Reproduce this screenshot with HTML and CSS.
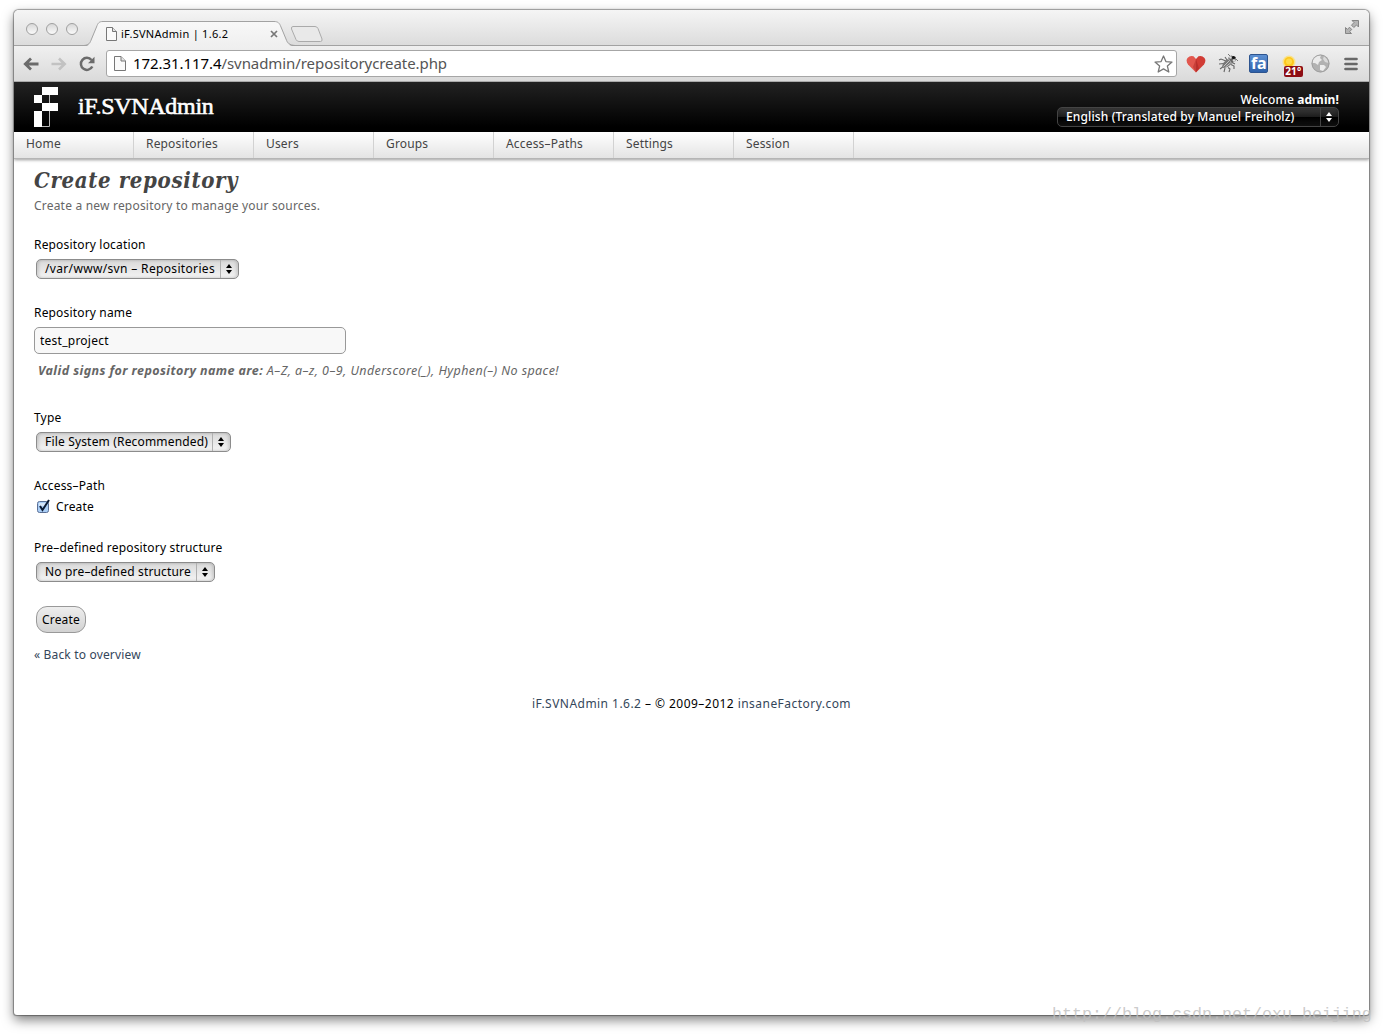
FILE: index.html
```html
<!DOCTYPE html>
<html lang="en">
<head>
  <meta charset="UTF-8" />
  <title>iF.SVNAdmin | 1.6.2</title>
  <link rel="stylesheet" href="styles.css">
</head>
<body>

  <div class="window">

    <div class="tabstrip">
      <div class="lights"><i></i><i></i><i></i></div>
      <div class="tab">
        <svg class="tab-shape" width="216" height="26" viewBox="0 0 216 26">
          <defs>
            <linearGradient id="tabFill" x1="0" y1="0" x2="0" y2="1">
              <stop offset="0" stop-color="#f8f8f8"/>
              <stop offset="1" stop-color="#efefef"/>
            </linearGradient>
          </defs>
          <path d="M0 25.5C5 25 6 23 7.500 19L12.500 6C14 2 15 .5 19 .5H190C194 .5 195.500 2 197 6L202 19C203.500 23 205 25 211 25.500V26H0Z" fill="url(#tabFill)"/>
          <path d="M0 24.500C5 24 6 22 7.500 18L12.500 6C14 2 15 .5 19 .5H190C194 .5 195.500 2 197 6L202 18C203.500 22 205 24 211 24.500" fill="none" stroke="#a2a2a2"/>
        </svg>
        <svg class="page-icon" width="11" height="14" viewBox="0 0 11 14">
          <path d="M.5.5H6.500L10.500 4.500V13.500H.5Z" fill="#fafafa" stroke="#777"/>
          <path d="M6.500.5V4.500H10.500" fill="#e4e4e4" stroke="#777"/>
        </svg>
        <span class="tab-title">iF.SVNAdmin | 1.6.2</span>
        <svg class="tab-close" width="8" height="8" viewBox="0 0 8 8">
          <path d="M1 1L7 7M7 1L1 7" stroke="#777" stroke-width="1.700"/>
        </svg>
      </div>
      <svg class="new-tab" width="34" height="18" viewBox="0 0 34 18">
        <path d="M3 1.500H25Q27 1.500 28 3.500L32 14Q32.500 16.500 30.500 16.500H9Q7 16.500 6 14.500L1.500 4Q1 1.500 3 1.500Z" fill="#e9e9e9" stroke="#aaa"/>
      </svg>
      <svg class="fullscreen" width="16" height="16" viewBox="0 0 16 16">
        <path d="M8 1.500H14.500V8L12.500 6L9.800 8.500L7.500 6.200L10 3.500Z" fill="#b4b4b4" stroke="#858585"/>
        <path d="M1.500 8.500V14.500H7.500L5.600 12.600L7.800 10.500L5.500 8.200L3.400 10.400Z" fill="#b4b4b4" stroke="#858585"/>
      </svg>
    </div>

    <div class="toolbar">
      <svg class="nav-icon" width="16" height="14" viewBox="0 0 16 14">
        <path d="M15.500 7H2.500M8 1.500L2.300 7L8 12.500" fill="none" stroke="#6b6b6b" stroke-width="2.800"/>
      </svg>
      <svg class="nav-icon" width="16" height="14" viewBox="0 0 16 14">
        <path d="M.5 7H13.500M8 1.500L13.700 7L8 12.500" fill="none" stroke="#c2c2c2" stroke-width="2.600"/>
      </svg>
      <svg class="reload" width="16" height="16" viewBox="0 0 16 16">
        <path d="M13.300 10.500A6 6 0 1 1 12.500 4" fill="none" stroke="#6b6b6b" stroke-width="2.500"/>
        <path d="M15.500 .8V7.300H9Z" fill="#6b6b6b"/>
      </svg>
      <div class="address">
        <svg width="12" height="15" viewBox="0 0 12 15">
          <path d="M.5.500H7L11.500 5V14.500H.5Z" fill="#fafafa" stroke="#777"/>
          <path d="M7 .5V5H11.500" fill="#e4e4e4" stroke="#777"/>
        </svg>
        <span class="url"><b>172.31.117.4</b>/svnadmin/repositorycreate.php</span>
        <svg class="bookmark" width="19" height="18" viewBox="0 0 19 18">
          <path d="M9.500 1L11.900 6.600L18 7.100L13.400 11.100L14.800 17L9.500 13.900L4.200 17L5.600 11.100L1 7.100L7.100 6.600Z" fill="#fff" stroke="#777" stroke-width="1.300" stroke-linejoin="round"/>
        </svg>
      </div>
      <div class="extensions">
        <svg width="20" height="18" viewBox="0 0 20 18">
          <path d="M10 17.500L2 9.500Q-.5 6 1.500 3Q4 0 7.500 1.300L10 4Z" fill="#e2574e"/>
          <path d="M10 17.500V4L12.500 1.300Q16 0 18.500 3Q20.500 6 18 9.500Z" fill="#d13c35"/>
          <path d="M10 4V17.500L7 12Z" fill="#c8403a"/>
          <path d="M10 4L13 13.500L10 17Z" fill="#b92f2b"/>
        </svg>
        <svg width="20" height="19" viewBox="0 0 20 19">
          <path d="M8 7L3 5L1 6M9 6L7 3M6 9.500L1 10M6 12L2 15M7 14L6 18M10 13.500L12 15L11 18M13 10.500L16 12L16 15M14 8.500L17 10" fill="none" stroke="#666" stroke-width="1.100"/>
          <path d="M4 14Q4 8 10 5L14 9Q11 14 4 14Z" fill="#777"/>
          <path d="M5.500 12.500L11.500 6.500M7.500 13L13 8.500" stroke="#c4c4c4"/>
          <path d="M10 4L13 1.500L18 3L17.500 7L14 9Z" fill="#666"/>
          <path d="M12 2L10 0M18 5L20 7" stroke="#777"/>
          <circle cx="12.500" cy="3.500" r="1.300" fill="#ddd"/>
          <circle cx="16" cy="6.500" r="1.300" fill="#ddd"/>
          <circle cx="15.500" cy="3.500" r="1.600" fill="#111"/>
        </svg>
        <span class="fa">fa</span>
        <span class="weather">
          <svg width="14" height="14" viewBox="0 0 14 14">
            <circle cx="7" cy="7" r="6.500" fill="#f9e28b"/>
            <circle cx="7" cy="7" r="5" fill="#fdc61c"/>
            <circle cx="7" cy="6.500" r="3" fill="#ffda4a"/>
          </svg>
          <em>21°</em>
        </span>
        <svg class="globe" width="19" height="19" viewBox="0 0 19 19">
          <circle cx="9.500" cy="9.500" r="9" fill="#b2b2b2"/>
          <path d="M3 4Q6 1 10 1.500L9 4L11 6L8 8L7 11L4 9L1.500 9Q1.500 6 3 4Z" fill="#ebebeb"/>
          <path d="M13 2L16 5L17.500 9L14 8L12 5Z" fill="#dadada"/>
          <path d="M9 11L13 11L15 13L12 17L9 16Z" fill="#ededed"/>
          <circle cx="9.500" cy="9.500" r="8.500" fill="none" stroke="#919191" stroke-opacity=".6"/>
        </svg>
        <svg class="menu" width="14" height="14" viewBox="0 0 14 14">
          <path d="M1.500 2H12.500M1.500 7H12.500M1.500 12H12.500" stroke="#686868" stroke-width="2.700" stroke-linecap="round"/>
        </svg>
      </div>
    </div>

    <div class="header">
      <svg class="logo" width="24" height="40" viewBox="0 0 24 40">
        <path d="M8 0H24V8H8ZM0 8H8V16H0ZM8 16H24V24H8ZM0 24H8V40H0Z" fill="#fff"/>
        <path d="M15.500 8V16M15.500 24V39.500H8" fill="none" stroke="#bbb"/>
      </svg>
      <div class="brand">iF.SVNAdmin</div>
      <div class="user">
        <div class="welcome">Welcome <b>admin!</b></div>
        <button type="button" class="select dark">
          <span>English (Translated by Manuel Freiholz)</span>
          <svg width="6" height="10" viewBox="0 0 6 10"><path d="M3 0L6 4H0ZM3 10L0 6H6Z" fill="#fff"/></svg>
        </button>
      </div>
    </div>

    <ul class="nav">
      <li>Home</li>
      <li>Repositories</li>
      <li>Users</li>
      <li>Groups</li>
      <li>Access–Paths</li>
      <li>Settings</li>
      <li>Session</li>
    </ul>

    <div class="content">
      <h1>Create repository</h1>
      <p class="desc">Create a new repository to manage your sources.</p>

      <form>
        <div class="field">
          <label>Repository location</label>
          <button type="button" class="select location">
            <span>/var/www/svn – Repositories</span>
            <svg width="6" height="10" viewBox="0 0 6 10"><path d="M3 0L6 4H0ZM3 10L0 6H6Z"/></svg>
          </button>
        </div>

        <div class="field name">
          <label>Repository name</label>
          <input type="text" value="test_project">
          <p class="hint"><b>Valid signs for repository name are:</b> A–Z, a–z, 0–9, Underscore(_), Hyphen(–) No space!</p>
        </div>

        <div class="field">
          <label>Type</label>
          <button type="button" class="select type">
            <span>File System (Recommended)</span>
            <svg width="6" height="10" viewBox="0 0 6 10"><path d="M3 0L6 4H0ZM3 10L0 6H6Z"/></svg>
          </button>
        </div>

        <div class="field access">
          <label>Access–Path</label>
          <div class="check">
            <svg width="14" height="15" viewBox="0 0 14 15">
              <rect x=".5" y="2.500" width="11" height="11" rx="2" fill="#a9cdf5" stroke="#5a6f95"/>
              <rect x="2" y="4" width="8" height="3" fill="#d5e6fa"/>
              <path d="M3 7L5.500 11L12 1" fill="none" stroke="#0b1a33" stroke-width="2"/>
            </svg>
            <span>Create</span>
          </div>
        </div>

        <div class="field">
          <label>Pre–defined repository structure</label>
          <button type="button" class="select structure">
            <span>No pre–defined structure</span>
            <svg width="6" height="10" viewBox="0 0 6 10"><path d="M3 0L6 4H0ZM3 10L0 6H6Z"/></svg>
          </button>
        </div>

        <button type="button" class="submit">Create</button>
      </form>

      <a class="back">« Back to overview</a>

      <div class="footer"><a>iF.SVNAdmin 1.6.2</a> – © 2009–2012 <a>insaneFactory.com</a></div>
    </div>

  </div>

  <div class="watermark">http://blog.csdn.net/oxu_beijing</div>

</body>
</html>
```
FILE: styles.css
```css
* {
  box-sizing: border-box;
}

body {
  margin: 0;
  height: 1035px;
  padding: 10px 14px 19px;
  overflow: hidden;
  background: #fff;
  color: #000;
  font-family: "Noto Sans", "Open Sans", sans-serif;
  font-size: 12px;
  line-height: 16px;
  letter-spacing: 0.17px;
}

svg {
  display: block;
  flex: none;
}

.window {
  width: 1355px;
  height: 1005px;
  border-radius: 5px 5px 3px 3px;
  background: #fff;
  box-shadow: 0 0 1px 0.5px rgba(0, 0, 0, 0.35), 0 5px 12px rgba(0, 0, 0, 0.5);
  overflow: hidden;
}

/* browser frame */
.tabstrip {
  display: flex;
  height: 36px;
  background: linear-gradient(#f5f5f5, #dcdcdc);
  border-bottom: 1px solid #a2a2a2;
}

.lights {
  display: flex;
  gap: 8px;
  padding: 13px 0 0 12px;
  width: 75px;
}

.lights i {
  width: 12px;
  height: 12px;
  border: 1px solid #a0a0a0;
  border-radius: 50%;
  background: linear-gradient(#d8d8d8, #fafafa);
}

.tab {
  position: relative;
  display: flex;
  align-items: center;
  width: 193px;
  height: 26px;
  margin-top: 11px;
  padding-left: 17px;
}

.tab-shape {
  position: absolute;
  left: -5px;
  top: 0;
}

.page-icon,
.tab-title,
.tab-close {
  position: relative;
}

.tab-title {
  flex: 1;
  margin-left: 4px;
  font-size: 11px;
  letter-spacing: 0.27px;
}

.tab-close {
  margin-right: 4px;
}

.new-tab {
  margin: 15px 0 0 8px;
}

.fullscreen {
  margin: 9px 9px 0 auto;
}

.toolbar {
  display: flex;
  align-items: center;
  height: 36px;
  padding: 0 11px 0 9px;
  background: linear-gradient(#f0f0f0, #dadada);
  border-bottom: 1px solid #aaa;
}

.nav-icon {
  margin-right: 12px;
}

.reload {
  margin-right: 11px;
}

.address {
  display: flex;
  align-items: center;
  width: 1071px;
  height: 27px;
  padding: 0 3px 0 7px;
  border: 1px solid #a6a6a6;
  border-radius: 3px;
  background: #fff;
}

.url {
  flex: 1;
  margin: -2px 0 0 7px;
  font-size: 15px;
  letter-spacing: -0.07px;
  color: #555;
}

.url b {
  font-weight: 400;
  color: #000;
}

.extensions {
  display: flex;
  flex: 1;
  align-items: center;
  justify-content: space-between;
  margin-left: 9px;
}

.fa {
  width: 19px;
  height: 19px;
  border: 1px solid #2d548f;
  border-radius: 2px;
  background: linear-gradient(#5d90d2, #2d60a9);
  color: #fff;
  font-size: 16px;
  font-weight: 700;
  line-height: 17px;
  letter-spacing: -0.3px;
  text-align: center;
}

.weather {
  position: relative;
  width: 22px;
  height: 17px;
  margin: 0 -2px 0 2px;
}

.weather em {
  position: absolute;
  left: 2px;
  top: 11px;
  width: 19px;
  height: 11px;
  border-radius: 2px;
  background: #8d0d14;
  color: #fff;
  font-size: 10px;
  font-style: normal;
  font-weight: 700;
  line-height: 11px;
  text-align: center;
}

.globe {
  margin: 0 2px 0 -2px;
}

/* page header */
.header {
  display: flex;
  height: 50px;
  padding: 5px 30px 0 20px;
  background: linear-gradient(#222, #000 90%);
  color: #fff;
}

.brand {
  margin-left: 20px;
  font-family: "Liberation Serif", serif;
  font-size: 24px;
  line-height: 38px;
  letter-spacing: -0.3px;
  -webkit-text-stroke: 0.6px #fff;
}

.user {
  display: flex;
  flex-direction: column;
  align-items: flex-end;
  margin-left: auto;
  padding-top: 5px;
}

.welcome {
  font-weight: 500;
  letter-spacing: 0.1px;
}

/* drop-down boxes */
.select {
  display: flex;
  align-items: center;
  height: 20px;
  margin: 6px 0 0 2px;
  padding: 0 6px 0 8px;
  border: 1px solid #8c8c8c;
  border-radius: 5px;
  background: linear-gradient(#d9d9d9, #f4f4f4);
  box-shadow: inset 2px 0 3px rgba(0, 0, 0, 0.12), inset -2px 0 3px rgba(0, 0, 0, 0.12);
  color: #000;
  font: inherit;
  letter-spacing: inherit;
  white-space: nowrap;
}

.select span {
  flex: 1;
  height: 18px;
  border-right: 1px solid #b0b0b0;
  line-height: 17px;
  text-align: left;
}

.select svg {
  margin-left: 5px;
}

.dark {
  width: 282px;
  margin: -1px 0 0;
  border-color: #444;
  background: linear-gradient(#3a3a3a, #1c1c1c 50%, #000 52%, #111);
  color: #fff;
  font-weight: 500;
  letter-spacing: 0.13px;
}

.dark span {
  border-color: #444;
}

.location {
  width: 203px;
  letter-spacing: 0.34px;
}

.type {
  width: 195px;
}

.structure {
  width: 179px;
}

.nav {
  display: flex;
  height: 27px;
  margin: 0;
  padding: 0;
  list-style: none;
  background: linear-gradient(#fff, #e4e4e4);
  border-bottom: 1px solid #b5b5b5;
  box-shadow: 0 1px 3px rgba(0, 0, 0, 0.4);
  color: #444;
}

.nav li {
  width: 120px;
  padding: 4px 12px;
  border-right: 1px solid #d2d2d2;
}

/* form page */
.content {
  padding: 8px 20px;
}

h1 {
  margin: 0;
  color: #444;
  font-family: "DejaVu Serif", serif;
  font-size: 22px;
  font-stretch: condensed;
  font-style: italic;
  font-weight: 700;
  line-height: 27px;
  letter-spacing: 0.65px;
}

.desc {
  margin: 4px 0 23px;
  color: #666;
  letter-spacing: 0.2px;
}

.field {
  display: flex;
  flex-direction: column;
  align-items: flex-start;
  margin-bottom: 26px;
}

.name {
  margin-bottom: 31px;
}

.name input {
  width: 312px;
  height: 27px;
  margin-top: 6px;
  padding: 0 5px;
  border: 1px solid #999;
  border-radius: 5px;
  background: #f8f8f8;
  color: #000;
  font: inherit;
  letter-spacing: 0.25px;
}

.hint {
  margin: 9px 0 0 4px;
  color: #666;
  font-size: 12.5px;
  font-style: italic;
  letter-spacing: 0.41px;
}

.access {
  margin-bottom: 25px;
}

.check {
  display: flex;
  gap: 5px;
  margin: 5px 0 0 3px;
}

.submit {
  display: block;
  width: 50px;
  height: 27px;
  margin: -2px 0 14px 2px;
  padding: 0;
  border: 1px solid #999;
  border-radius: 11px;
  background: linear-gradient(#eee, #d2d2d2);
  color: #000;
  font: inherit;
  letter-spacing: inherit;
}

a {
  color: #34465a;
}

.footer {
  margin-top: 33px;
  text-align: center;
  letter-spacing: 0.46px;
}

.watermark {
  position: absolute;
  left: 1052px;
  top: 1006px;
  color: rgba(190, 190, 190, 0.8);
  font-family: "Liberation Mono", monospace;
  font-size: 16.67px;
  line-height: 18px;
  letter-spacing: 0;
}
```
